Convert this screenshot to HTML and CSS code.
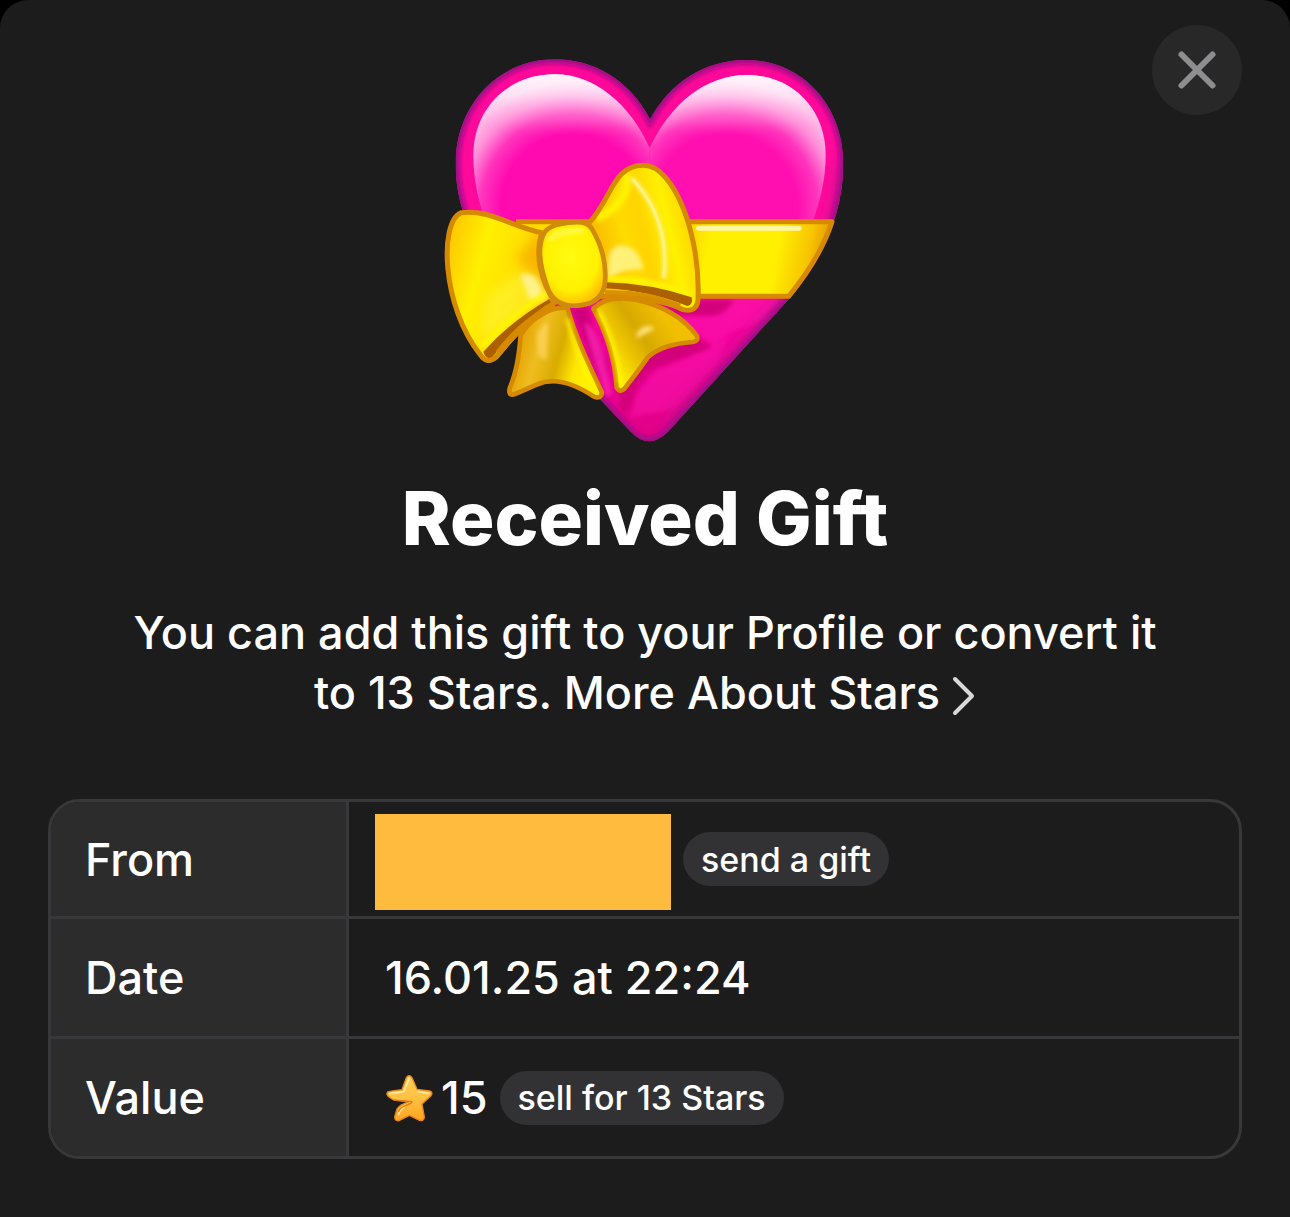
FILE: index.html
```html
<!DOCTYPE html>
<html lang="en">
<head>
<meta charset="utf-8">
<meta name="viewport" content="width=device-width, initial-scale=1">
<title>Received Gift</title>
<link rel="stylesheet" href="styles.css">
</head>
<body>
<main class="sheet">
  <button class="close" type="button" aria-label="Close">
    <svg viewBox="0 0 40 40" aria-hidden="true"><path d="M4.500 4.500 35.500 35.500M35.500 4.500 4.500 35.500"/></svg>
  </button>

  <svg class="gift" viewBox="0 0 1290 1230" role="img" aria-label="Heart with a ribbon">
    <defs>
      <filter id="soft" x="-20%" y="-20%" width="140%" height="140%"><feGaussianBlur stdDeviation="7"/></filter>
      <filter id="wide" x="-40%" y="-40%" width="180%" height="180%"><feGaussianBlur stdDeviation="18"/></filter>
      <linearGradient id="heartFill" x1="0" y1="60" x2="0" y2="1200" gradientUnits="userSpaceOnUse">
        <stop offset="0" stop-color="#ff0899"/><stop offset=".55" stop-color="#ff0b9e"/><stop offset=".75" stop-color="#f2009a"/><stop offset="1" stop-color="#e00087"/>
      </linearGradient>
      <radialGradient id="glossL" cx="430" cy="500" r="420" gradientUnits="userSpaceOnUse">
        <stop offset="0" stop-color="#ff0ab0"/><stop offset=".52" stop-color="#ff0ab0"/><stop offset=".66" stop-color="#ff35bd"/><stop offset=".78" stop-color="#ff8cd8"/><stop offset=".9" stop-color="#ffc4ea"/>
      </radialGradient>
      <radialGradient id="glossR" cx="885" cy="500" r="420" gradientUnits="userSpaceOnUse">
        <stop offset="0" stop-color="#ff0fb0"/><stop offset=".52" stop-color="#ff0fb0"/><stop offset=".66" stop-color="#ff35bd"/><stop offset=".78" stop-color="#ff8cd8"/><stop offset=".9" stop-color="#ffc4ea"/>
      </radialGradient>
      <linearGradient id="sheen" x1="0" y1="103" x2="0" y2="285" gradientUnits="userSpaceOnUse">
        <stop offset="0" stop-color="#fff" stop-opacity=".85"/><stop offset=".35" stop-color="#fff" stop-opacity=".5"/><stop offset=".75" stop-color="#ffb0e2" stop-opacity=".28"/><stop offset="1" stop-color="#ff70cc" stop-opacity="0"/>
      </linearGradient>
      <linearGradient id="band" x1="790" y1="600" x2="1190" y2="680" gradientUnits="userSpaceOnUse">
        <stop offset="0" stop-color="#ffdc00"/><stop offset=".12" stop-color="#fff000"/><stop offset=".62" stop-color="#fff000"/><stop offset=".85" stop-color="#f8c400"/><stop offset="1" stop-color="#e09600"/>
      </linearGradient>
      <linearGradient id="loopL" x1="50" y1="620" x2="350" y2="700" gradientUnits="userSpaceOnUse">
        <stop offset="0" stop-color="#ffc800"/><stop offset=".35" stop-color="#fff000"/><stop offset=".7" stop-color="#ffe000"/><stop offset="1" stop-color="#f5ab00"/>
      </linearGradient>
      <linearGradient id="loopR" x1="500" y1="650" x2="800" y2="580" gradientUnits="userSpaceOnUse">
        <stop offset="0" stop-color="#f9b800"/><stop offset=".3" stop-color="#ffdb00"/><stop offset=".5" stop-color="#ffd400"/><stop offset=".75" stop-color="#fff100"/><stop offset="1" stop-color="#ffd000"/>
      </linearGradient>
      <radialGradient id="knot" cx=".48" cy=".42" r=".62">
        <stop offset="0" stop-color="#fffb10"/><stop offset=".65" stop-color="#fff100"/><stop offset="1" stop-color="#ffb400"/>
      </radialGradient>
      <linearGradient id="tailL" x1="270" y1="880" x2="480" y2="940" gradientUnits="userSpaceOnUse">
        <stop offset="0" stop-color="#e2a100"/><stop offset=".3" stop-color="#efbd20"/><stop offset=".6" stop-color="#d9ac00"/><stop offset=".85" stop-color="#ffe500"/><stop offset="1" stop-color="#fff000"/>
      </linearGradient>
      <linearGradient id="tailR" x1="520" y1="950" x2="700" y2="830" gradientUnits="userSpaceOnUse">
        <stop offset="0" stop-color="#fff200"/><stop offset=".3" stop-color="#efc800"/><stop offset=".6" stop-color="#d6a900"/><stop offset="1" stop-color="#f1bf00"/>
      </linearGradient>
      <clipPath id="heartClip"><path d="M660 238C600 120 490 58 375 58C200 58 77 200 77 370C77 425 85 475 103 525C160 660 310 860 515 1083L602 1175Q656 1232 714 1175L1072 782C1160 685 1240 540 1240 370C1240 190 1110 60 950 60C820 60 720 130 660 238Z"/></clipPath>
      <clipPath id="loopLClip"><path d="M94 518C180 508 245 560 335 578C315 640 330 720 365 785C290 830 240 890 195 950Q172 970 150 943C36 800 26 545 94 518Z"/></clipPath>
      <clipPath id="loopRClip"><path d="M478 548C545 475 550 375 640 376C733 375 813 590 804 780Q802 815 760 800C690 775 610 755 525 750C530 680 520 600 478 548Z"/></clipPath>
    </defs>

    <g clip-path="url(#heartClip)">
      <rect width="1290" height="1230" fill="url(#heartFill)"/>
      <path d="M165 540C145 480 130 420 130 345C130 210 230 103 375 103C490 103 600 190 659 325V540Z" fill="url(#glossL)"/>
      <path d="M659 325C720 190 830 105 950 105C1090 105 1187 210 1187 345C1187 420 1170 480 1150 540H659Z" fill="url(#glossR)"/>
      <path d="M130 345C130 210 230 103 375 103C490 103 600 190 659 325C720 190 830 105 950 105C1090 105 1187 210 1187 345Z" fill="url(#sheen)"/>
      <path d="M700 770H1060L1000 840L900 880L845 918L760 850ZM680 990L900 890L860 970L730 1110L600 1130L620 1060Z" fill="#ff1cb4" opacity=".4" filter="url(#soft)"/>
      <path d="M690 780H910Q890 825 840 828H740ZM800 890L845 922Q750 960 670 985Q610 1040 600 1110L570 1120V1060L660 935Z" fill="#d00078" opacity=".9" filter="url(#soft)"/>
      <path d="M420 800H475Q490 880 535 970L520 1040Q460 900 420 800Z" fill="#c90078" opacity=".85" filter="url(#soft)"/>
      <path d="M462 850Q490 840 520 940L545 1060L530 1075Q490 960 462 850Z" fill="#ff27b8" opacity=".7" filter="url(#soft)"/>
      <path d="M1240 370C1240 540 1160 685 1072 782L714 1175" fill="none" stroke="#c0128e" stroke-width="60" opacity=".5" filter="url(#wide)"/>
      <path d="M660 238C600 120 490 58 375 58C200 58 77 200 77 370C77 425 85 475 103 525C160 660 310 860 515 1083L602 1175Q656 1232 714 1175L1072 782C1160 685 1240 540 1240 370C1240 190 1110 60 950 60C820 60 720 130 660 238Z" fill="none" stroke="#a10b87" stroke-width="26" filter="url(#soft)"/>
    </g>

    <path d="M258 545H1206C1185 610 1145 685 1076 769H500L420 640Z" fill="url(#band)"/>
    <path d="M805 565H1108" fill="none" stroke="#fff6a5" stroke-width="14" stroke-linecap="round"/>
    <path d="M258 545H1206C1185 610 1145 685 1076 769H500" fill="none" stroke="#d78a00" stroke-width="15" stroke-linejoin="round"/>

    <g stroke="#d58a00" stroke-width="14" stroke-linejoin="round">
      <path d="M272 885C300 840 350 800 412 803C435 885 465 950 516 1058Q513 1078 492 1070Q390 1002 320 1034L255 1062Q232 1070 240 1042Q265 985 272 885Z" fill="url(#tailL)"/>
      <path d="M490 806C520 775 570 770 620 780C690 795 760 830 801 888Q806 904 788 906Q700 912 655 950Q620 1000 583 1046Q570 1060 560 1042C555 960 530 880 490 806Z" fill="url(#tailR)"/>
    </g>
    <path d="M412 835Q435 940 495 1048" fill="none" stroke="#fff500" stroke-width="10" filter="url(#soft)"/>
    <path d="M505 815Q555 900 572 1035" fill="none" stroke="#fff500" stroke-width="12" filter="url(#soft)"/>
    <path d="M620 880Q645 845 675 865Q650 880 620 895Z" fill="#ffe27a" filter="url(#soft)"/>
    <path d="M320 880Q345 840 355 850L350 960L325 950Z" fill="#ffd765" opacity=".7" filter="url(#soft)"/>

    <path d="M94 518C180 508 245 560 335 578C315 640 330 720 375 788C300 830 245 895 200 950Q172 976 150 943C36 800 26 545 94 518Z" fill="url(#loopL)"/>
    <g clip-path="url(#loopLClip)">
      <path d="M170 770Q260 690 300 697Q335 710 360 780L150 900Z" fill="#fff12c" opacity=".8" filter="url(#wide)"/>
      <path d="M270 705Q310 690 325 725L350 780L300 780Z" fill="#fff5a0" opacity=".8" filter="url(#soft)"/>
      <path d="M250 650Q310 610 335 580V700L310 690Z" fill="#f8a900" opacity=".6" filter="url(#wide)"/>
      <path d="M362 752Q240 830 158 920" fill="none" stroke="#fff600" stroke-width="18" filter="url(#soft)"/>
    </g>
    <path d="M358 777Q240 845 160 935Q165 955 184 955Q270 850 372 800Z" fill="#ad6000"/>
    <path d="M375 800Q280 840 205 940" fill="none" stroke="#d88b00" stroke-width="20"/>
    <path d="M94 518C180 508 245 560 335 578C315 640 330 720 375 788C300 830 245 895 200 950Q172 976 150 943C36 800 26 545 94 518Z" fill="none" stroke="#d58a00" stroke-width="15" stroke-linejoin="round"/>

    <path d="M478 548C545 475 550 375 640 376C733 375 813 590 804 780Q800 818 760 806C690 775 610 758 525 755C530 680 520 600 478 548Z" fill="url(#loopR)"/>
    <g clip-path="url(#loopRClip)">
      <path d="M500 535Q600 490 590 400" fill="none" stroke="#fff200" stroke-width="26" filter="url(#soft)"/>
      <path d="M535 680Q530 615 580 616Q630 625 640 690Q590 680 530 720Z" fill="#fff078" filter="url(#soft)"/>
      <path d="M530 717Q670 720 780 766" fill="none" stroke="#fff500" stroke-width="20" filter="url(#soft)"/>
      <path d="M603 413Q720 530 702 715" fill="none" stroke="#fff274" stroke-width="14" filter="url(#soft)"/>
      <path d="M610 420Q720 540 701 710" fill="none" stroke="#fff482" stroke-width="8" stroke-linecap="round"/>
    </g>
    <path d="M525 727Q660 730 785 772Q790 794 772 798Q660 753 525 745Z" fill="#ad6000"/>
    <path d="M525 760Q640 755 750 799" fill="none" stroke="#db9000" stroke-width="18"/>
    <path d="M478 548C545 475 550 375 640 376C733 375 813 590 804 780Q800 818 760 809C690 775 610 772 525 770" fill="none" stroke="#d58a00" stroke-width="15" stroke-linejoin="round"/>
    <path d="M345 575Q365 550 430 547Q470 543 485 565Q535 650 524 735Q512 790 450 796Q380 805 355 750Q310 630 345 575Z" fill="url(#knot)" stroke="#ce8b10" stroke-width="14"/>
    <path d="M360 600Q375 575 455 570" fill="none" stroke="#fff84c" stroke-width="16" stroke-linecap="round" filter="url(#soft)"/>
  </svg>

  <h1 class="title">Received Gift</h1>
  <p class="description">You can add this gift to your Profile or convert it<br>to 13 Stars. <a class="more" href="#stars">More About Stars<svg class="chevron" viewBox="0 0 24 42" aria-hidden="true"><path d="M3 4 20 21 3 38"/></svg></a></p>

  <table class="details">
    <tr>
      <th scope="row">From</th>
      <td class="from"><div class="value"><span class="sender"></span><button class="pill" type="button">send a gift</button></div></td>
    </tr>
    <tr>
      <th scope="row">Date</th>
      <td>16.01.25 at 22:24</td>
    </tr>
    <tr>
      <th scope="row">Value</th>
      <td><div class="value"><span class="price"><svg class="star" viewBox="50 66 144 144" aria-hidden="true">
        <defs><linearGradient id="starFill" x1="0" y1="0" x2="0" y2="1"><stop offset="0" stop-color="#ffcf55"/><stop offset=".5" stop-color="#ffc043"/><stop offset="1" stop-color="#ffa51f"/></linearGradient></defs>
        <path d="M114 77Q122 65 131 77L146 112L184 117Q196 121 187 132L161 156L168 195Q167 208 154 205L123 190L92 206Q79 208 79 195L86 171Q93 158 123 149L76 144Q50 130 57 121Q62 117 101 113Z" fill="url(#starFill)" stroke="#e8871a" stroke-width="4" stroke-linejoin="round"/>
        <path d="M64 125L107 119L122 80M150 119L181 124M91 187Q94 174 108 165" fill="none" stroke="#ffeaa0" stroke-width="5" stroke-linecap="round" stroke-linejoin="round"/>
        <path d="M82 145L122 148Q137 147 126 155Q94 166 91 178" fill="none" stroke="#dd7c16" stroke-width="4" stroke-linecap="round"/>
      </svg>15</span><button class="pill" type="button">sell for 13 Stars</button></div></td>
    </tr>
  </table>
</main>
</body>
</html>
```
FILE: styles.css
```css
* {
  box-sizing: border-box;
}

body {
  margin: 0;
  background: #000;
  color: #fff;
  font-family: Inter, "Liberation Sans", sans-serif;
  font-size: 45px;
  font-weight: 500;
}

.sheet {
  position: relative;
  display: flex;
  flex-direction: column;
  align-items: center;
  min-height: 100vh;
  padding: 40px 48px 58px;
  border-radius: 28px 28px 0 0;
  background: #1c1c1d;
}

.close {
  position: absolute;
  top: 25px;
  right: 48px;
  display: grid;
  place-items: center;
  width: 90px;
  height: 90px;
  padding: 0;
  border: 0;
  border-radius: 50%;
  background: #282829;
}

.close svg {
  width: 40px;
  height: 40px;
  fill: none;
  stroke: #8e8e90;
  stroke-width: 6;
  stroke-linecap: round;
}

.gift {
  width: 430px;
  height: 410px;
}

.title {
  margin: 24px 0 0;
  font-size: 74px;
  font-weight: 800;
  line-height: 88px;
}

.description {
  margin: 41px 0 0;
  line-height: 60px;
  text-align: center;
}

.more {
  color: inherit;
  text-decoration: none;
}

.chevron {
  width: 24px;
  height: 42px;
  margin-left: 12px;
  vertical-align: -8px;
  fill: none;
  stroke: #d8d8d9;
  stroke-width: 4;
  stroke-linecap: round;
  stroke-linejoin: round;
}

.details {
  width: 100%;
  margin-top: 76px;
  border: 3px solid #38383a;
  border-radius: 32px;
  border-spacing: 0;
  overflow: hidden;
}

.details th,
.details td {
  height: 120px;
  padding: 0 36px;
  border-bottom: 3px solid #38383a;
  text-align: left;
}

.details th {
  width: 298px;
  padding-left: 34px;
  border-right: 3px solid #38383a;
  background: #2c2c2d;
  font-weight: 500;
}

.details tr:first-child > * {
  height: 117px;
}

.details tr:last-child > * {
  height: 117px;
  border-bottom: 0;
}

.details .from {
  padding-left: 26px;
}

.value {
  display: flex;
  align-items: center;
  gap: 12px;
}

.sender {
  width: 296px;
  height: 96px;
  margin-top: 6px;
  background: #ffbb3d;
}

.price {
  display: flex;
  align-items: center;
  gap: 8px;
}

.star {
  width: 48px;
  height: 48px;
}

.pill {
  height: 54px;
  padding: 0 18px;
  border: 0;
  border-radius: 27px;
  background: #323234;
  color: inherit;
  font: inherit;
  font-size: 34px;
}
```
